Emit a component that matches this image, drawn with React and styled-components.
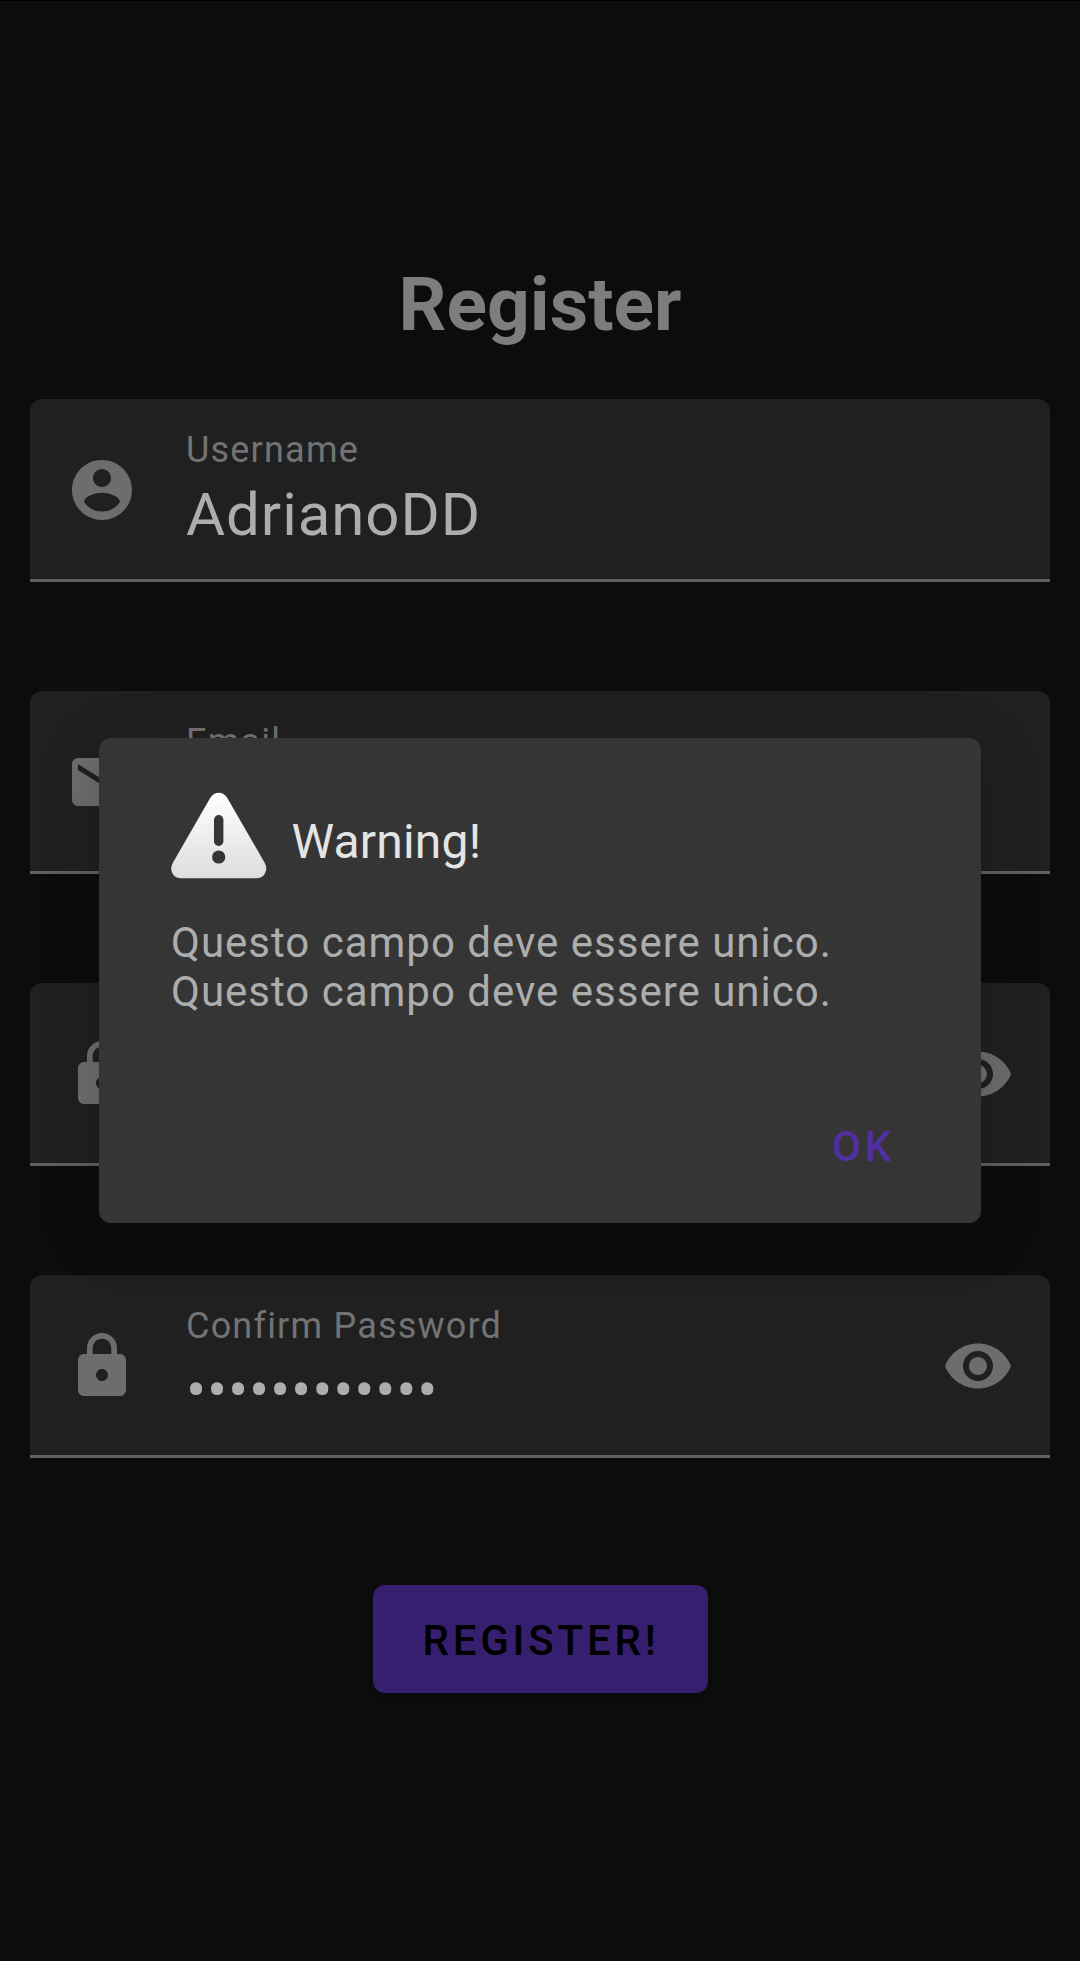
import React from "react";
import styled, { createGlobalStyle } from "styled-components";

const GlobalStyle = createGlobalStyle`
  * { box-sizing: border-box; }
  body {
    margin: 0;
    background: #0c0c0c;
    font-family: Roboto, "Liberation Sans", sans-serif;
  }
`;

const Screen = styled.main`
  position: relative;
  display: flex;
  flex-direction: column;
  align-items: center;
  height: 1961px;
  padding: 259px 30px 0;
  border-top: 1px solid #000;
  background: #0c0c0c;
  overflow: hidden;
`;

const Title = styled.h1`
  margin: 0 0 51px;
  font-size: 75px;
  line-height: 88px;
  font-weight: 700;
  color: #7d7d7d;
`;

const Form = styled.form`
  display: flex;
  flex-direction: column;
  align-items: center;
  gap: 109px;
  width: 100%;
`;

const FieldBox = styled.div`
  display: flex;
  align-items: flex-start;
  width: 100%;
  height: 183px;
  padding: 0 36px;
  border-bottom: 3px solid #5f5f5f;
  border-radius: 12px 12px 0 0;
  background: #202020;
`;

const FieldIcon = styled.svg`
  flex: none;
  width: 72px;
  height: 72px;
  margin-top: 55px;
  fill: #6d6d6d;
`;

const FieldText = styled.div`
  flex: 1;
  padding: 30px 0 0 48px;
`;

const Label = styled.div`
  font-size: 36px;
  line-height: 42px;
  letter-spacing: 1.2px;
  color: #737373;
`;

const Value = styled.div`
  margin-top: 9px;
  font-size: 60px;
  line-height: 70px;
  letter-spacing: ${(p) => (p.$masked ? "0.78px" : "0.94px")};
  color: #adadad;
`;

const Submit = styled.button`
  width: 335px;
  height: 108px;
  margin-top: 18px;
  padding: 3px 0 0 2px;
  border: 0;
  border-radius: 12px;
  background: #371f6f;
  color: #000;
  font: 500 42px/50px Roboto, "Liberation Sans", sans-serif;
  letter-spacing: 3.8px;
  box-shadow: 0 2px 4px rgba(0, 0, 0, 0.2);
`;

const Dialog = styled.section`
  position: absolute;
  top: 737px;
  left: 99px;
  display: flex;
  flex-direction: column;
  width: 882px;
  height: 485px;
  padding: 54px 72px 0;
  border-radius: 12px;
  background: #353535;
  box-shadow: 0 12px 60px rgba(0, 0, 0, 0.2);
`;

const DialogHeader = styled.header`
  display: flex;
  align-items: center;
  gap: 24.5px;
  height: 88px;
`;

const WarningIcon = styled.svg`
  width: 96px;
  height: 88px;
`;

const DialogTitle = styled.h2`
  margin: 12px 0 0;
  font-size: 48px;
  line-height: 56px;
  font-weight: 400;
  letter-spacing: 0.2px;
  color: #e4e4e4;
`;

const Message = styled.p`
  margin: 38px 0 0;
  font-size: 42px;
  line-height: 49px;
  letter-spacing: 1px;
  color: #adadad;
`;

const DialogAction = styled.button`
  align-self: flex-end;
  margin: 106px 14px 0 0;
  padding: 0;
  border: 0;
  background: none;
  color: #5030a0;
  font: 500 42px/50px Roboto, "Liberation Sans", sans-serif;
  letter-spacing: 3.75px;
`;

const ICONS = {
  account:
    "M12 2C6.48 2 2 6.48 2 12s4.48 10 10 10 10-4.48 10-10S17.52 2 12 2zm0 3c1.66 0 3 1.34 3 3s-1.34 3-3 3-3-1.34-3-3 1.34-3 3-3zm0 14.2c-2.5 0-4.71-1.28-6-3.22.03-1.99 4-3.08 6-3.08 1.99 0 5.97 1.09 6 3.08-1.29 1.94-3.5 3.22-6 3.22z",
  email:
    "M20 4H4c-1.1 0-1.99.9-1.99 2L2 18c0 1.1.9 2 2 2h16c1.1 0 2-.9 2-2V6c0-1.1-.9-2-2-2zm0 4l-8 5-8-5V6l8 5 8-5v2z",
  lock:
    "M18 8h-1V6c0-2.76-2.24-5-5-5S7 3.24 7 6v2H6c-1.1 0-2 .9-2 2v10c0 1.1.9 2 2 2h12c1.1 0 2-.9 2-2V10c0-1.1-.9-2-2-2zm-6 9c-1.1 0-2-.9-2-2s.9-2 2-2 2 .9 2 2-.9 2-2 2zm3.1-9H8.9V6c0-1.71 1.39-3.1 3.1-3.1 1.71 0 3.1 1.39 3.1 3.1v2z",
  eye:
    "M12 4.5C7 4.5 2.73 7.61 1 12c1.73 4.39 6 7.5 11 7.5s9.27-3.11 11-7.5c-1.73-4.39-6-7.5-11-7.5zM12 17c-2.76 0-5-2.24-5-5s2.24-5 5-5 5 2.24 5 5-2.24 5-5 5zm0-8c-1.66 0-3 1.34-3 3s1.34 3 3 3 3-1.34 3-3-1.34-3-3-3z",
};

const Icon = ({ name }) => (
  <FieldIcon viewBox="0 0 24 24" aria-hidden="true">
    <path d={ICONS[name]} />
  </FieldIcon>
);

const Field = ({ icon, label, value, masked }) => (
  <FieldBox>
    <Icon name={icon} />
    <FieldText>
      <Label>{label}</Label>
      <Value $masked={masked}>{value}</Value>
    </FieldText>
    {masked && <Icon name="eye" />}
  </FieldBox>
);

export default function App() {
  return (
    <>
      <GlobalStyle />
      <Screen>
        <Title>Register</Title>
        <Form onSubmit={(e) => e.preventDefault()}>
          <Field icon="account" label="Username" value="AdrianoDD" />
          <Field icon="email" label="Email" />
          <Field icon="lock" label="Password" masked />
          <Field icon="lock" label="Confirm Password" value={"•".repeat(12)} masked />
          <Submit>REGISTER!</Submit>
        </Form>
        <Dialog role="alertdialog">
          <DialogHeader>
            <WarningIcon viewBox="0 0 96 88" aria-hidden="true">
              <defs>
                <linearGradient id="warn" x1="0" y1="0" x2="0" y2="1">
                  <stop offset="0" stopColor="#ffffff" />
                  <stop offset="1" stopColor="#dddddd" />
                </linearGradient>
              </defs>
              <path
                d="M39.5 5.5Q42.5 .8 47.7 .8T56 5.5L93.5 70.5Q97 77 93.6 82Q90.8 86.3 85 86.3H10.5Q4.5 86.3 1.8 82Q-1.5 77 2 70.5Z"
                fill="url(#warn)"
              />
              <rect x="43" y="23" width="9.4" height="31" rx="4.7" fill="#353535" />
              <circle cx="47.7" cy="65" r="6.6" fill="#353535" />
            </WarningIcon>
            <DialogTitle>Warning!</DialogTitle>
          </DialogHeader>
          <Message>
            Questo campo deve essere unico.
            <br />
            Questo campo deve essere unico.
          </Message>
          <DialogAction>OK</DialogAction>
        </Dialog>
      </Screen>
    </>
  );
}
